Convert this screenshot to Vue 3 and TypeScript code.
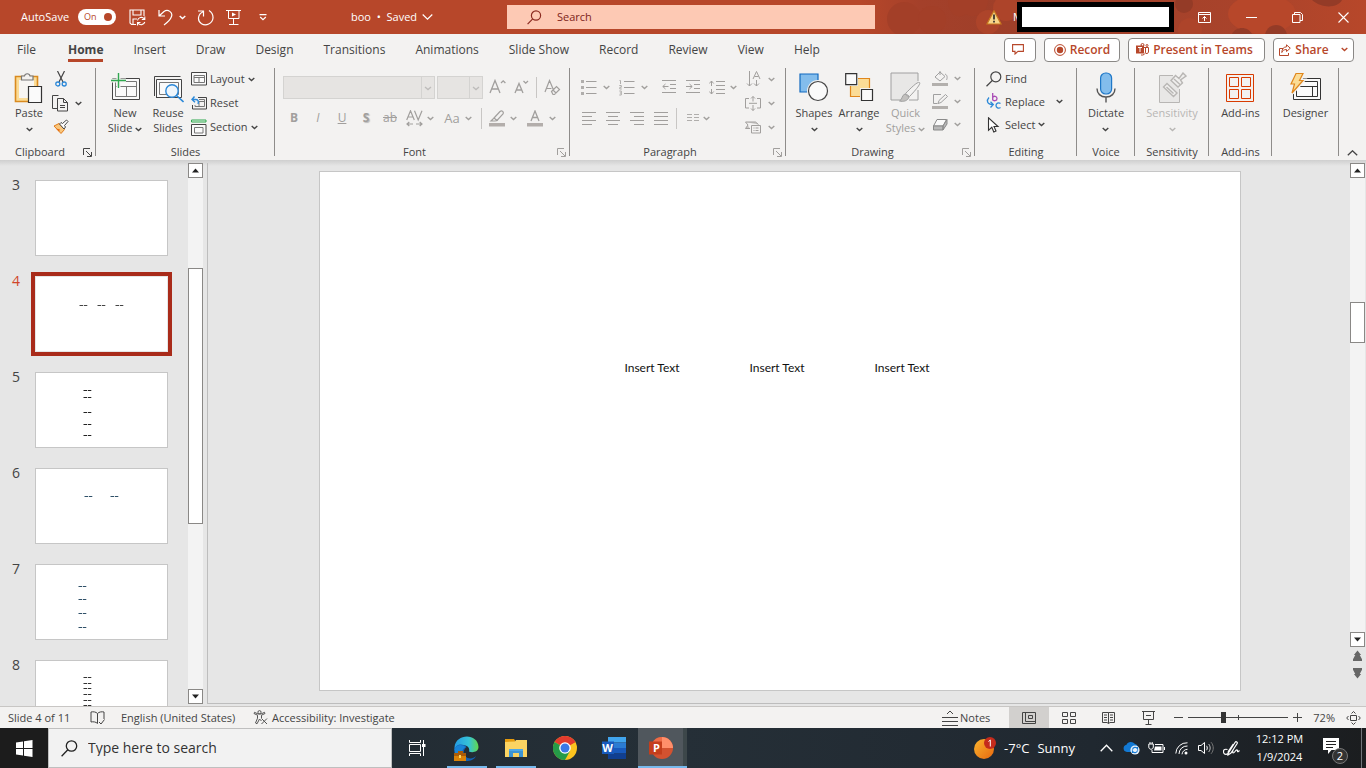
<script setup lang="ts">
import { h, ref } from 'vue'

const Chevron = () =>
  h('svg', { class: 'chev', width: 7, height: 5, viewBox: '0 0 7 5', 'aria-hidden': 'true' }, [
    h('path', { d: 'M.7 1l2.8 2.6L6.3 1', fill: 'none', stroke: 'currentColor', 'stroke-width': 1.4 }),
  ])

const Launcher = () =>
  h('svg', { class: 'launcher', width: 9, height: 9, viewBox: '0 0 9 9', 'aria-hidden': 'true' }, [
    h('path', { d: 'M.5 7V.5H7M3 3l5 5M8.500 4v4.500H4', fill: 'none', stroke: 'currentColor' }),
  ])

const tabs = ['File', 'Home', 'Insert', 'Draw', 'Design', 'Transitions', 'Animations', 'Slide Show', 'Record', 'Review', 'View', 'Help']
const activeTab = ref('Home')

interface Thumb {
  id: number
  tint: string
  marks: [number, number][]
}
const slides: Thumb[] = [
  { id: 3, tint: '#333', marks: [] },
  { id: 4, tint: '#444', marks: [[43, 28], [61, 28], [79, 28]] },
  { id: 5, tint: '#222', marks: [[47, 17], [47, 24], [47, 39], [47, 51], [47, 62]] },
  { id: 6, tint: '#2f5068', marks: [[48, 27], [74, 27]] },
  { id: 7, tint: '#2f5068', marks: [[42, 21], [42, 34], [42, 48], [42, 62]] },
  { id: 8, tint: '#333', marks: [[47, 16], [47, 22], [47, 27], [47, 33], [47, 39], [47, 44]] },
]
const selected = ref(4)
const autoSave = ref(true)
const zoom = ref(72)
const boxes = ['Insert Text', 'Insert Text', 'Insert Text']
const aligns = [
  { name: 'Align Left', d: 'M0 .5h14M0 4.500h10M0 8.500h14M0 12.500h10' },
  { name: 'Center', d: 'M0 .5h14M2 4.500h10M0 8.500h14M2 12.500h10' },
  { name: 'Align Right', d: 'M0 .5h14M4 4.500h10M0 8.500h14M4 12.500h10' },
  { name: 'Justify', d: 'M0 .5h14M0 4.500h14M0 8.500h14M0 12.500h14' },
]
</script>

<template>
  <div class="app">
    <header class="titlebar">
      <svg class="pattern" viewBox="0 0 506 34" preserveAspectRatio="xMaxYMid slice" aria-hidden="true">
        <rect x="0" width="506" height="34" fill="url(#fade)" />
        <defs>
          <linearGradient id="fade"><stop offset="0" stop-color="#b7472a" /><stop offset=".12" stop-color="#a4402a" /><stop offset=".3" stop-color="#9e3f29" /><stop offset=".75" stop-color="#a9432b" /><stop offset="1" stop-color="#b7472a" /></linearGradient>
        </defs>
        <g fill="#a33f28"><circle cx="44" cy="19" r="17" /><circle cx="72" cy="20" r="14" /><path d="M88 0h40c0 12-12 20-22 14-8 6-18 0-18-14z" /></g>
        <g fill="#ad442a"><circle cx="128" cy="22" r="12" /><circle cx="146" cy="8" r="13" /><circle cx="330" cy="30" r="12" /></g>
        <ellipse cx="402" cy="14" rx="34" ry="20" fill="#b7472a" />
        <g fill="#943b27"><circle cx="416" cy="36" r="11" /><circle cx="324" cy="4" r="9" /><path d="M452 0h30c-4 8-20 9-30 0zM372 34c4-8 16-8 20 0z" /></g>
      </svg>
      <div class="quick">
        <span id="as-label">AutoSave</span>
        <button class="toggle" role="switch" :aria-checked="autoSave" aria-labelledby="as-label" @click="autoSave = !autoSave">On<i></i></button>
        <button aria-label="Save" class="q-save">
          <svg width="17" height="17" viewBox="0 0 17 17" fill="none" stroke="#fff" stroke-width="1.100"><path d="M7 15.500H2.500L1 14V1h14v6M4 1v5h8V1M4 15v-5h4M8.500 11.500a3.800 3.800 0 0 1 6.800-1.500M15.800 7.500v3h-3M15.800 13a3.800 3.800 0 0 1-6.800 1M8.500 16.500v-3h3" /></svg>
        </button>
        <button aria-label="Undo" class="q-undo">
          <svg width="15" height="17" viewBox="0 0 15 17" fill="none" stroke="#fff" stroke-width="1.200"><path d="M1 1v6h6M1 7l5-4.500c4-3 9 1 7.500 5C12.500 10.500 10 13 6 16" /></svg>
        </button>
        <button aria-label="Undo list" class="q-chev"><Chevron /></button>
        <button aria-label="Redo" class="q-redo">
          <svg width="17" height="17" viewBox="0 0 17 17" fill="none" stroke="#fff" stroke-width="1.200"><path d="M1 2h5.500v5.500M6.500 2.500C.5 5 0 12 4.500 14.700c4.500 2.800 11-.2 11.500-5.700.2-3.500-1.500-6-4-7.500" /></svg>
        </button>
        <button aria-label="Start From Beginning" class="q-show">
          <svg width="16" height="17" viewBox="0 0 16 17" fill="none" stroke="#fff"><path d="M0 1.500h15M2.500 2v7.500h10.500V2M7.500 10v5.500M3 15.500h9.500" /><path d="M6 3.500v4l4-2z" fill="#fff" stroke="none" /></svg>
        </button>
        <button aria-label="Customize Quick Access Toolbar">
          <svg width="8" height="7" viewBox="0 0 8 7" fill="none" stroke="#fff" stroke-width="1.200"><path d="M.5.6h7M1.200 3L4 5.600 6.800 3" /></svg>
        </button>
      </div>
      <button class="doc">boo&nbsp; •&nbsp; Saved
        <svg width="11" height="6" viewBox="0 0 11 6" fill="none" stroke="#fff" stroke-width="1.200"><path d="M.7.5l4.800 4.600L10.300.5" /></svg>
      </button>
      <label class="search">
        <svg width="15" height="15" viewBox="0 0 15 15" fill="none" stroke="#8b2a20" stroke-width="1.200"><circle cx="9" cy="5.500" r="4.600" /><path d="M5.700 8.800L.6 14.200" /></svg>
        <input type="text" placeholder="Search" aria-label="Search" />
      </label>
      <div class="account">
        <svg width="16" height="15" viewBox="0 0 16 15"><path d="M8 .8L15 14H1z" fill="#f8d58a" stroke="#c8791f" stroke-width="1.200" /><path d="M8 4.500v5M8 10.800v1.800" stroke="#222" stroke-width="1.600" /></svg>
        <span class="initial">M</span>
        <span class="mask"></span>
      </div>
      <div class="winctl">
        <button aria-label="Ribbon Display Options"><svg width="13" height="11" viewBox="0 0 13 11" fill="none" stroke="#fff"><path d="M.5.5h12v10H.5zM.5 2.500h12M6.500 9V4.500M4.500 6.500l2-2 2 2" /></svg></button>
        <button aria-label="Minimize"><svg width="11" height="11" viewBox="0 0 11 11" stroke="#fff"><path d="M0 5.500h11" /></svg></button>
        <button aria-label="Restore"><svg width="11" height="11" viewBox="0 0 11 11" fill="none" stroke="#fff"><path d="M.5 2.500h7.500v8H.5zM2.500 2.500v-2h6l2 2v6H8" /></svg></button>
        <button aria-label="Close"><svg width="11" height="11" viewBox="0 0 11 11" stroke="#fff" stroke-width="1.100"><path d="M.5.5l10 10M10.500.5l-10 10" /></svg></button>
      </div>
    </header>

    <nav class="tabs">
      <button v-for="t in tabs" :key="t" :class="['tab', { on: t === activeTab }]" @click="activeTab = t"><span>{{ t }}</span></button>
      <div class="actions">
        <button class="act cm" aria-label="Comments"><svg width="12" height="11" viewBox="0 0 12 11" fill="none" stroke="#b7472a" stroke-width="1.100"><path d="M.6.6h10.800v6.800H6L3 10V7.400H.6z" /></svg></button>
        <button class="act rec"><svg width="12" height="12" viewBox="0 0 12 12"><circle cx="6" cy="6" r="5.400" fill="none" stroke="#b7472a" /><circle cx="6" cy="6" r="3.200" fill="#b7472a" /></svg>Record</button>
        <button class="act teams">
          <svg width="13" height="13" viewBox="0 0 13 13"><circle cx="6.500" cy="2" r="1.500" fill="none" stroke="#b7472a" /><circle cx="11" cy="2.500" r="1" fill="none" stroke="#b7472a" /><path d="M8 4.500h4.500v4.500a2 2 0 0 1-2.500 1.500M9.500 4.500V9c0 2-2 3.500-4.500 3" fill="none" stroke="#b7472a" /><path d="M0 2.500h8v8H0z" fill="#b7472a" /><path d="M2 4.500h4M4 4.500V9" stroke="#fff" /></svg>Present in Teams</button>
        <button class="act share">
          <svg width="12" height="12" viewBox="0 0 12 12" fill="none" stroke="#b7472a"><path d="M4 4.500H.5v7h9V9M7.500.8l3.800 3.400-3.800 3.300V5.500C5 5.500 3.800 6.500 2.800 8.500 3 5 4.500 3 7.500 2.800z" /></svg>Share<Chevron /></button>
      </div>
    </nav>

    <section class="ribbon" aria-label="Home ribbon">
      <div class="group g-clip">
        <div class="body">
          <button class="big">
            <span class="ic"><svg width="30" height="32" viewBox="0 0 30 32"><path d="M1.500 4.500h22v25h-22z" fill="#fbdc96" stroke="#d98a1f" stroke-width="1.600" /><path d="M5 8h15v18H5z" fill="#f7f5f2" /><path d="M7.500 8V4h3a2.800 2.800 0 0 1 5.500 0h3v4z" fill="#f3f1ef" stroke="#777" stroke-width="1.200" /><path d="M14.500 14.500h13v16h-13z" fill="#fafafa" stroke="#333" stroke-width="1.200" /></svg></span>
            <span>Paste</span><span><Chevron /></span>
          </button>
          <div class="rows">
            <button aria-label="Cut"><svg width="12" height="16" viewBox="0 0 12 16" fill="none"><path d="M2.500 0l5.500 11M9.500 0L4 11" stroke="#444" stroke-width="1.200" /><circle cx="2.800" cy="13" r="2" stroke="#2b88d8" stroke-width="1.300" /><circle cx="9.200" cy="13" r="2" stroke="#2b88d8" stroke-width="1.300" /></svg></button>
            <button aria-label="Copy" class="wide"><svg width="17" height="17" viewBox="0 0 17 17" fill="none" stroke="#444"><path d="M5 13.500H.5V.5h6M5.500 3.500h6l4 4v8.500h-10zM11.500 3.500v4h4M8 10.500h5M8 12.500h5" /></svg><Chevron /></button>
            <button aria-label="Format Painter"><svg width="16" height="16" viewBox="0 0 16 16"><path d="M1 7l7 7.500 3.500-4L6 4.500z" fill="#f9c67c" stroke="#e07b1a" /><path d="M3 9.500l4 1-1 2z" fill="#e8690b" /><path d="M6.500 5l4.500 5 1.500-2-1-1.500L15 2.500 13.500 1 9.500 4.500 8 3.500z" fill="#fff" stroke="#444" /></svg></button>
          </div>
        </div>
        <div class="foot"><span>Clipboard</span><button aria-label="Clipboard options" class="lb"><Launcher /></button></div>
      </div>

      <div class="group g-slides">
        <div class="body">
          <button class="big">
            <span class="ic"><svg width="32" height="32" viewBox="0 0 32 32" fill="none"><path d="M3.500 6.500h27v21h-27z" fill="#fafafa" stroke="#444" /><path d="M6.500 9.500h21v15h-21zM6.500 14.500h21M17.500 14.500v10" stroke="#777" /><path d="M9.500 0v15M1 8.500h16" stroke="#f3f2f1" stroke-width="4" /><path d="M9.500 1v15M2 8.500h15" stroke="#2fa84f" stroke-width="1.400" /></svg></span>
            <span>New</span><span>Slide <Chevron /></span>
          </button>
          <button class="big">
            <span class="ic"><svg width="31" height="30" viewBox="0 0 31 30" fill="none"><path d="M1.500 23V3.500h26" stroke="#444" /><path d="M3.500 25V6.500h25v18h-25z" stroke="#444" fill="#fafafa" /><path d="M6.500 9.500h19v12h-19z" stroke="#777" /><circle cx="19" cy="18" r="6.200" fill="#eef5fb" stroke="#2b88d8" stroke-width="1.400" /><path d="M23.500 22.500l7 6.500" stroke="#2b88d8" stroke-width="1.600" /></svg></span>
            <span>Reuse</span><span>Slides</span>
          </button>
          <div class="rows">
            <button><svg width="16" height="14" viewBox="0 0 16 14" fill="none"><path d="M.5.5h15v12.500H.5z" stroke="#444" fill="#fafafa" /><path d="M3 3.500h10.500v7H3zM3 5.500h10.500M8 5.500v5" stroke="#777" /></svg>Layout <Chevron /></button>
            <button><svg width="16" height="14" viewBox="0 0 16 14" fill="none"><path d="M7 1.500h8.500v11.500H1.500V9" stroke="#444" /><path d="M8 3.500h5.500v7H4V9M8 5.500h5M8 6v4" stroke="#777" /><path d="M3.500.5L1 3.500l3 2.800M1 3.500h3.500c2.500 0 3.500 1.500 2.500 4.500" stroke="#2b88d8" stroke-width="1.400" /></svg>Reset</button>
            <button><svg width="16" height="17" viewBox="0 0 16 17" fill="none"><path d="M.5 1h14.500v2H.5z" stroke="#2fa84f" fill="#e9f6ec" /><path d="M.5 5.500h14.500v11H.5z" stroke="#444" fill="#fafafa" /><path d="M3.500 8.500h8.500v5.500H3.500z" stroke="#777" /></svg>Section <Chevron /></button>
          </div>
        </div>
        <div class="foot"><span>Slides</span></div>
      </div>

      <div class="group g-font off">
        <div class="body col">
          <div class="line">
            <select class="sel name" aria-label="Font" disabled></select><select class="sel size" aria-label="Font size" disabled></select>
            <button class="t24" aria-label="Increase Font Size"><svg width="17" height="17" viewBox="0 0 17 17" fill="none" stroke="currentColor" stroke-width="1.300"><path d="M1 14L6 1.500 11 14M2.500 10h7M12 4l2.200-2.200L16.400 4" /></svg></button>
            <button class="t24" aria-label="Decrease Font Size"><svg width="15" height="17" viewBox="0 0 15 17" fill="none" stroke="currentColor" stroke-width="1.300"><path d="M1 14l4-9.500L9 14M2.500 11h5M9.500 2l2.200 2.200L14 2" /></svg></button>
            <i class="vs"></i>
            <button class="t24" aria-label="Clear Formatting"><svg width="17" height="17" viewBox="0 0 17 17" fill="none" stroke="currentColor" stroke-width="1.200"><path d="M1 13L5.500 1.500 9.500 11M2.500 9.500h5M7.500 12.500l5-5 3 3-5 5h-1.500zM9 11l3 3" /></svg></button>
          </div>
          <div class="line two">
            <button class="t24"><b>B</b></button><button class="t24"><em>I</em></button><button class="t24"><u>U</u></button><button class="t24 shadow">S</button><button class="t24"><s>ab</s></button>
            <button class="t36" aria-label="Character Spacing"><svg width="17" height="17" viewBox="0 0 17 17" fill="none" stroke="currentColor" stroke-width="1.200"><path d="M.7 10L4.500.8 8.300 10M2 7h5M8.500.8l3.700 9.200L16 .8M1 14h6M10 14h6M3.300 12L1 14l2.300 2M13.700 12l2.300 2-2.300 2" /></svg><Chevron /></button>
            <button class="t40 cc">Aa <Chevron /></button>
            <i class="vs"></i>
            <button class="t36" aria-label="Highlight Color"><svg width="17" height="17" viewBox="0 0 17 17"><path d="M2 11l3-3 3 2.500-2 .5zM5 8l6-6.500c2-1.500 4 .5 3 2.300L8 10.500z" fill="none" stroke="#a19f9d" stroke-width="1.200" /><path d="M0 13h16v3.500H0z" fill="#b3aeab" /></svg><Chevron /></button>
            <button class="t40" aria-label="Font Color"><svg width="17" height="17" viewBox="0 0 17 17"><path d="M4 11L8 1l4 10M5.500 7.500h5" fill="none" stroke="#a19f9d" stroke-width="1.300" /><path d="M0 13h16v3.500H0z" fill="#b3aeab" /></svg><Chevron /></button>
          </div>
        </div>
        <div class="foot"><span>Font</span><button aria-label="Font options" class="lb"><Launcher /></button></div>
      </div>

      <div class="group g-para off">
        <div class="body">
          <div class="col">
            <div class="line one">
              <button class="t39" aria-label="Bullets"><svg width="16" height="16" viewBox="0 0 16 16"><path d="M0 1h3v3H0zM0 7h3v3H0zM0 13h3v3H0z" fill="#b0aeac" /><path d="M5 2.500h10.500M5 8.500h10.500M5 14.500h10.500" stroke="currentColor" /></svg><Chevron /></button>
              <button class="t39" aria-label="Numbering"><svg width="16" height="17" viewBox="0 0 16 17" fill="none" stroke="currentColor"><path d="M5 2.500h10.500M5 8.500h10.500M5 14.500h10.500" /><path d="M.5 1.500h1V5M.3 6.500h2v1.800H.8V10h2M.3 12h2v4H.3M.8 14h1.500" stroke="#b0aeac" /></svg><Chevron /></button>
              <button class="t24" aria-label="Decrease Indent"><svg width="15" height="14" viewBox="0 0 15 14" fill="none" stroke="currentColor"><path d="M0 .5h14M8 4.500h6M8 8.500h6M0 12.500h14M6.500 6.500H.8M3.500 4L.8 6.500 3.500 9" /></svg></button>
              <button class="t24" aria-label="Increase Indent"><svg width="15" height="14" viewBox="0 0 15 14" fill="none" stroke="currentColor"><path d="M0 .5h14M8 4.500h6M8 8.500h6M0 12.500h14M0 6.500h6M3.500 4L6.200 6.500 3.500 9" /></svg></button>
              <button class="t36 ls" aria-label="Line Spacing"><svg width="17" height="15" viewBox="0 0 17 15" fill="none" stroke="currentColor"><path d="M7 1.500h9M7 5.500h9M7 9.500h9M7 13.500h9M2.500 1v5M2.500 9v5M.3 3.500L2.500 1l2.200 2.500M.3 11.500L2.500 14l2.200-2.500" /></svg><Chevron /></button>
            </div>
            <div class="line two">
              <button v-for="a in aligns" :key="a.name" class="t24" :aria-label="a.name"><svg width="14" height="13" viewBox="0 0 14 13" stroke="currentColor"><path :d="a.d" /></svg></button>
              <i class="vs"></i>
              <button class="t36" aria-label="Columns"><svg width="12" height="8" viewBox="0 0 12 8" stroke="#b0aeac"><path d="M0 .5h5M7 .5h5M0 3.500h5M7 3.500h5M0 6.500h5M7 6.500h5" /></svg><Chevron /></button>
            </div>
          </div>
          <div class="rows">
            <button aria-label="Text Direction"><svg width="17" height="17" viewBox="0 0 17 17" fill="none" stroke="currentColor"><path d="M4.500 0v15M2 12.500L4.500 15 7 12.500M11.500 9v6M9 12.500l2.500 2.500 2.500-2.500M8 8L11.500.5 15 8M9.500 5.500h4" /></svg><Chevron /></button>
            <button aria-label="Align Text"><svg width="17" height="15" viewBox="0 0 17 15" fill="none" stroke="currentColor"><path d="M4 2.500H.5V12H4M12 2.500h3.500V12H12M4 7.300h8M8 .5v5M8 9v5.500M6 2.500L8 .5l2 2M6 12.500l2 2 2-2" /></svg><Chevron /></button>
            <button aria-label="Convert to SmartArt"><svg width="17" height="13" viewBox="0 0 17 13" fill="none" stroke="currentColor"><path d="M.5 1h10l3 2.500M.5 1L3 4 .5 7.500H5" fill="#c8c6c4" /><path d="M6.500 4.500h9v7.500h-9zM8.500 7h1M10.500 7h3M8.500 9.500h1M10.500 9.500h3" fill="#f3f2f1" /></svg><Chevron /></button>
          </div>
        </div>
        <div class="foot"><span>Paragraph</span><button aria-label="Paragraph options" class="lb"><Launcher /></button></div>
      </div>

      <div class="group g-draw">
        <div class="body">
          <button class="big"><span class="ic"><svg width="30" height="30" viewBox="0 0 30 30"><path d="M1 1h18v18H1z" fill="#83bdec" stroke="#1169bf" stroke-width="1.200" /><circle cx="19" cy="18" r="11" fill="#f3f2f1" /><circle cx="19" cy="18" r="9.500" fill="#fafafa" stroke="#444" stroke-width="1.200" /></svg></span><span>Shapes</span><span><Chevron /></span></button>
          <button class="big"><span class="ic"><svg width="29" height="29" viewBox="0 0 29 29"><path d="M5.500 5.500h19v18h-19z" fill="#fbdc96" stroke="#e0861b" stroke-width="1.200" /><path d="M.5.5h11v11H.5zM16.500 16.500h11v11h-11z" fill="#fafafa" stroke="#f3f2f1" stroke-width="3" /><path d="M.7.7h11v11H.7zM16.500 16.500h11v11h-11z" fill="#fafafa" stroke="#333" stroke-width="1.200" /></svg></span><span>Arrange</span><span><Chevron /></span></button>
          <button class="big dim"><span class="ic"><svg width="32" height="31" viewBox="0 0 32 31"><path d="M1 1h27v14L17 28H1z" fill="#e8e7e6" /><path d="M11 28H1V1h27v8M28 18v10h-9" fill="none" stroke="#a0a0a0" /><path d="M29.500 10.500c2 1-6 10-10 14l-4-3c4-4 12-12.500 14-11z" fill="#f3f2f1" stroke="#a0a0a0" /><path d="M15 22l4 3c-1 4-6 5-9.500 4 3-1 2-6 5.500-7z" fill="#c2c0be" stroke="#a0a0a0" /></svg></span><span>Quick</span><span>Styles <Chevron /></span></button>
          <div class="rows r23 dim">
            <button aria-label="Shape Fill"><svg width="17" height="17" viewBox="0 0 17 17" fill="none" stroke="#a0a0a0"><path d="M3 7l5-5 5 4.500-5 4.500zM8 5V1M13 4c2.500 1 2.500 4 1.500 6" /><path d="M0 13h16v3H0z" fill="#b3b0ad" stroke="none" /></svg><Chevron /></button>
            <button aria-label="Shape Outline"><svg width="17" height="17" viewBox="0 0 17 17" fill="none" stroke="#a0a0a0"><path d="M9 1.500H1.500v9h4M6 10.500l1-3 6.500-6 2 2-6.500 6z" /><path d="M0 13h16v3H0z" fill="#b3b0ad" stroke="none" /></svg><Chevron /></button>
            <button aria-label="Shape Effects"><svg width="17" height="14" viewBox="0 0 17 14"><path d="M5 1.500h9.500L11 8H1.500z" fill="#fafafa" stroke="#8a8a8a" /><path d="M1.500 8v4H11V8zM11 12l4-6V1.500L11 8z" fill="#b9b9b9" stroke="#8a8a8a" /></svg><Chevron /></button>
          </div>
        </div>
        <div class="foot"><span>Drawing</span><button aria-label="Drawing options" class="lb dim"><Launcher /></button></div>
      </div>

      <div class="group g-edit">
        <div class="body">
          <div class="rows r23">
            <button><svg width="16" height="16" viewBox="0 0 16 16" fill="none" stroke="#444" stroke-width="1.200"><circle cx="9.800" cy="5.800" r="5" /><path d="M6.300 9.500L.5 15.200" /></svg>Find</button>
            <button><svg width="16" height="17" viewBox="0 0 16 17" fill="none" stroke-width="1.300"><path d="M6.700 0v7.500M6.700 4.500c1-2 4.300-1.500 4.300 1s-3.300 3-4.300 1" stroke="#a94ab5" /><path d="M14.500 10.500c-2-1.500-4.500 0-4.500 2s2.500 3.500 4.500 2M3 4.500c-2.500 2.500-2.500 7 4 7M4.500 8.800L7.300 11.500 4.500 14.500" stroke="#2b88d8" /></svg>Replace <Chevron /></button>
            <button><svg width="16" height="16" viewBox="0 0 16 16"><path d="M2.500.8v12.500l3.300-3 2 4.700 2.200-1-2-4.500h4z" fill="#fff" stroke="#333" stroke-width="1.100" /></svg>Select <Chevron /></button>
          </div>
        </div>
        <div class="foot"><span>Editing</span></div>
      </div>

      <div class="group g-voice">
        <div class="body"><button class="big"><span class="ic"><svg width="20" height="32" viewBox="0 0 20 32"><rect x="4.600" y="1" width="11" height="21" rx="5" fill="#83bdec" stroke="#1f78c8" stroke-width="1.200" /><path d="M1 16.500c0 5 3.500 8.500 9 8.500s9-3.500 9-8.500M10 25v5.500" fill="none" stroke="#555" stroke-width="1.400" /></svg></span><span>Dictate</span><span><Chevron /></span></button></div>
        <div class="foot"><span>Voice</span></div>
      </div>
      <div class="group g-sens">
        <div class="body"><button class="big pale"><span class="ic"><svg width="29" height="32" viewBox="0 0 29 32" fill="none" stroke="#b8b6b4"><path d="M15 3.500H1.500v27h20V17" fill="#e8e7e6" /><path d="M5.500 15l3.500-3.500 10 9.500-3.500 3.500zM8.500 15l7 6.500M13 8.500l4.500-5 3.500 3 4-5.500 3 3-5.500 4 2 3-4.500 4z" fill="#f0efee" stroke-width="1.400" /><path d="M16 7l6 5.500" stroke-width="1.400" /></svg></span><span>Sensitivity</span><span><Chevron /></span></button></div>
        <div class="foot"><span>Sensitivity</span></div>
      </div>
      <div class="group g-add">
        <div class="body"><button class="big"><span class="ic"><svg width="28" height="28" viewBox="0 0 28 28" fill="none" stroke="#d83b01"><path d="M.5.5h27v27H.5zM3.500 3.500h9v9h-9zM15.500 3.500h9v9h-9zM3.500 15.500h9v9h-9zM15.500 15.500h9v9h-9z" /></svg></span><span>Add-ins</span></button></div>
        <div class="foot"><span>Add-ins</span></div>
      </div>
      <div class="group g-des">
        <div class="body"><button class="big"><span class="ic"><svg width="31" height="32" viewBox="0 0 31 32"><path d="M3.500 6.500h27v21h-27z" fill="#fafafa" stroke="#333" /><path d="M6.500 9.500h21v15h-21zM10 14.500h17.500M22.500 14.500v10" fill="none" stroke="#333" /><path d="M6 1.500h7L9.500 8.500H13L2 21l2.500-9H1z" fill="#fbdc96" stroke="#f3f2f1" stroke-width="4" /><path d="M6 1.500h7L9.500 8.500H13L2 21l2.500-9H1z" fill="#fbdc96" stroke="#e0861b" stroke-width="1.200" /></svg></span><span>Designer</span></button></div>
        <div class="foot"></div>
      </div>
      <button class="collapse" aria-label="Collapse the Ribbon"><svg width="11" height="6" viewBox="0 0 11 6" fill="none" stroke="#444" stroke-width="1.300"><path d="M.8 5.300L5.500.8l4.700 4.500" /></svg></button>
    </section>

    <main class="work">
      <ol class="thumbs">
        <li v-for="s in slides" :key="s.id" :class="{ cur: s.id === selected }" @click="selected = s.id">
          <span class="no">{{ s.id }}</span>
          <button class="thumb" :aria-label="'Slide ' + s.id">
            <svg viewBox="0 0 131 74"><path v-for="(m, i) in s.marks" :key="i" :d="`M${m[0]}.500 ${m[1]}.500h8`" :stroke="s.tint" stroke-dasharray="3.500 .8" /></svg>
          </button>
        </li>
      </ol>
      <div class="scroll left">
        <button aria-label="Scroll up"><svg width="9" height="5" viewBox="0 0 9 5"><path d="M1 4.500L4.500.5 8 4.500z" fill="#222" /></svg></button>
        <div class="track"><div class="handle"></div></div>
        <button aria-label="Scroll down"><svg width="9" height="5" viewBox="0 0 9 5"><path d="M1 .5L4.500 4.500 8 .5z" fill="#222" /></svg></button>
      </div>
      <div class="canvas">
        <article class="slide"><p v-for="(b, i) in boxes" :key="i">{{ b }}</p></article>
      </div>
      <div class="scroll right">
        <button aria-label="Scroll up"><svg width="9" height="5" viewBox="0 0 9 5"><path d="M1 4.500L4.500.5 8 4.500z" fill="#222" /></svg></button>
        <div class="track"><div class="handle"></div></div>
        <button aria-label="Scroll down"><svg width="9" height="5" viewBox="0 0 9 5"><path d="M1 .5L4.500 4.500 8 .5z" fill="#222" /></svg></button>
        <button class="jump" aria-label="Previous Slide"><svg width="9" height="12" viewBox="0 0 10 12"><path d="M5 0l4 5H7.500L10 9.500v2H0v-2L2.500 5H1z" fill="#666" /></svg></button>
        <button class="jump" aria-label="Next Slide"><svg width="9" height="12" viewBox="0 0 10 12"><path d="M5 12L1 7h1.500L0 2.500v-2h10v2L7.500 7H9z" fill="#666" /></svg></button>
      </div>
    </main>

    <footer class="status">
      <span class="s-slide">Slide 4 of 11</span>
      <button class="s-book" aria-label="Spelling"><svg width="15" height="14" viewBox="0 0 15 14" fill="none" stroke="#444"><path d="M7.500 2.500C6 .8 3 .5 1 1v10c2-.5 5-.2 6.500 1.500M7.500 2.500C9 .8 12 .5 14 1v7M7.500 2.500v10M9 11l2 2 3.500-4.500" /></svg></button>
      <button class="s-lang">English (United States)</button>
      <button class="s-acc"><svg width="16" height="15" viewBox="0 0 16 15" fill="none" stroke="#555"><circle cx="6.500" cy="2.200" r="1.600" /><path d="M1 3.500l3.500 1.700v3L2.500 13l1.500.8L6.500 9l2 2M1 3.500l.5-1.200L5 4h3l3.500-1.700.5 1.200-3.500 1.700v3M8.500 8.500l5.500 5.500M14 8.500L8.500 14" /></svg>Accessibility: Investigate</button>
      <div class="s-right">
        <button class="notes"><svg width="17" height="16" viewBox="0 0 17 16" fill="none" stroke="#444"><path d="M0 7.500h16M0 11.500h16M0 15.500h16M5 4l3-3 3 3" /></svg>Notes</button>
        <button class="view on" aria-label="Normal"><svg width="14" height="12" viewBox="0 0 14 12" fill="none" stroke="#444"><path d="M.5.5h13v11H.5zM3.500.5v9M3.500 9.500h10M6.500 3.500h4v3h-4z" /></svg></button>
        <button class="view" aria-label="Slide Sorter"><svg width="14" height="12" viewBox="0 0 14 12" fill="none" stroke="#444"><path d="M.5.5h5v4h-5zM8.500.5h5v4h-5zM.5 7.500h5v4h-5zM8.500 7.500h5v4h-5z" /></svg></button>
        <button class="view" aria-label="Reading View"><svg width="14" height="13" viewBox="0 0 14 13" fill="none" stroke="#444"><path d="M6.500 1.500H.5v10h4.500l1.500 1L8 11.500h4.500v-10zM6.500 1.500v11M2 4h3M2 6.500h3M2 9h3M8 4h3M8 6.500h3M8 9h3" /></svg></button>
        <button class="view" aria-label="Slide Show"><svg width="14" height="14" viewBox="0 0 14 14" fill="none" stroke="#444"><path d="M0 .5h13M1.500 1v7.500h10V1M4 4.500h5M6.500 8.500v5M3.500 13.500h6" /></svg></button>
        <button class="z" aria-label="Zoom out"><svg width="9" height="9" viewBox="0 0 9 9" stroke="#444"><path d="M0 4.500h9" /></svg></button>
        <input class="range" type="range" min="10" max="190" v-model="zoom" aria-label="Zoom" />
        <button class="z" aria-label="Zoom in"><svg width="9" height="9" viewBox="0 0 9 9" stroke="#444"><path d="M0 4.500h9M4.500 0v9" /></svg></button>
        <button class="pct">72%</button>
        <button class="fit" aria-label="Fit slide to window"><svg width="15" height="14" viewBox="0 0 15 14" fill="none" stroke="#444"><path d="M4.500 4.500h6v5h-6zM5.500 2.500l2-2 2 2M5.500 11.500l2 2 2-2M2.500 5L.7 7l1.800 2M12.500 5l1.800 2-1.800 2" /></svg></button>
      </div>
    </footer>

    <div class="taskbar">
      <button class="start" aria-label="Start"><svg width="17" height="17" viewBox="0 0 17 17" fill="#fff"><path d="M0 2.500L7 1.500v6.500H0zM8 1.300L16.500 0v8H8zM0 9h7v6.500L0 14.500zM8 9h8.500v8L8 15.700z" /></svg></button>
      <label class="tsearch"><svg width="17" height="17" viewBox="0 0 17 17" fill="none" stroke="#222" stroke-width="1.300"><circle cx="10.500" cy="6" r="5.200" /><path d="M6.800 9.800L.6 16.200" /></svg><input type="text" placeholder="Type here to search" aria-label="Type here to search" /></label>
      <button class="app-btn tv" aria-label="Task View"><svg width="17" height="16" viewBox="0 0 17 16" fill="none" stroke="#fff"><path d="M.5 0v2.500h11V0M.5 4.500h11v7H.5zM.5 16v-2.500h11V16M14.500 0v16" /><path d="M13 4h3.500v3H13z" fill="#fff" stroke="none" /></svg></button>
      <button class="app-btn run" aria-label="Microsoft Edge"><svg width="25" height="25" viewBox="0 0 25 25"><defs><linearGradient id="eg" x2="1"><stop stop-color="#249ce4" /><stop offset=".6" stop-color="#36c3d8" /><stop offset="1" stop-color="#62d94a" /></linearGradient></defs><path d="M.5 11C2-3 24-3 24.500 11c0 5-6 6-9.500 4.500 1-3-1-6-5-6-5 0-8 2-9.500 5z" fill="url(#eg)" /><path d="M.6 14c1-6 8-7 12-3-3 2-5 8 1 11 4 1 6 0 8.500-2-2 4-6 5-9.500 5C5 25 0 21 .6 14z" fill="#1361b3" /><path d="M.6 13c2-5 8-5 11-2-4 2-5 8-2 13C3 23 0 18 .6 13z" fill="#1884d8" /><path d="M0 17h12v8H0z" fill="#d98208" /><path d="M0 17h12v3H0zM4 15h5v2H4z" fill="#a85b08" /><path d="M5 19h2v3H5z" fill="#ffd45a" /></svg></button>
      <button class="app-btn run exp" aria-label="File Explorer"><svg width="22" height="19" viewBox="0 0 22 19"><path d="M0 0h9l2 3H0z" fill="#e69b0d" /><path d="M0 3l10-.5 1-1.500h11v17H0z" fill="#fcd462" /><path d="M4 10h14v8h-4v-4H8v4H4z" fill="#3c94d4" /><path d="M4 10h14v2H4z" fill="#4fa8e6" /></svg></button>
      <button class="app-btn" aria-label="Google Chrome"><svg width="24" height="24" viewBox="0 0 24 24"><circle cx="12" cy="12" r="12" fill="#fcc31e" /><path d="M12 12L1.600 6A12 12 0 0 1 22.400 6z" fill="#e33b2e" /><path d="M12 12L1.600 6A12 12 0 0 0 12 24l5-9z" fill="#259b48" /><path d="M22.400 6H12v6z" fill="#e33b2e" /><circle cx="12" cy="12" r="5.800" fill="#fff" /><circle cx="12" cy="12" r="4.500" fill="#3b78e7" /></svg></button>
      <button class="app-btn" aria-label="Word"><svg width="24" height="22" viewBox="0 0 24 22"><path d="M6 0h18v5.500H6z" fill="#41a5ee" /><path d="M6 5.500h18V11H6z" fill="#2b7cd3" /><path d="M6 11h18v5.500H6z" fill="#185abd" /><path d="M6 16.500h18V22H6z" fill="#103f91" /><path d="M0 4.500h12v12.500H0z" fill="#185abd" /></svg><span class="badge">W</span></button>
      <button class="app-btn run ppt" aria-label="PowerPoint"><svg width="24" height="24" viewBox="0 0 24 24"><circle cx="13" cy="12" r="11" fill="#d35230" /><path d="M13 1a11 11 0 0 1 11 11H13z" fill="#ff8f6b" /><path d="M13 1v11H2A11 11 0 0 1 13 1z" fill="#ed6c47" /><path d="M0 5.500h13v13H0z" fill="#c43e1c" /></svg><span class="badge">P</span></button>
      <div class="tray">
        <button class="weather">
          <svg width="22" height="22" viewBox="0 0 22 22"><defs><linearGradient id="sun" x2="1" y2="1"><stop stop-color="#fbb52e" /><stop offset="1" stop-color="#e8680f" /></linearGradient></defs><circle cx="10" cy="12" r="10" fill="url(#sun)" /><circle cx="16" cy="6" r="6" fill="#c42b1c" /><path d="M14.500 4.500L16.300 3v6.500" fill="none" stroke="#fff" /></svg>
          <span>-7°C</span><span>Sunny</span></button>
        <button aria-label="Show hidden icons" class="up"><svg width="13" height="8" viewBox="0 0 13 8" fill="none" stroke="#fff" stroke-width="1.300"><path d="M.7 7.200l5.800-6 5.800 6" /></svg></button>
        <button aria-label="OneDrive"><svg width="17" height="14" viewBox="0 0 17 14"><path d="M4 11a3.700 3.700 0 0 1-.5-7.300A5 5 0 0 1 12 3c2.500.5 3.500 3 2 5.500L11 11z" fill="#1379d3" /><circle cx="12" cy="9" r="4.600" fill="#e8f2fb" /><path d="M9.500 8.500a2.700 2.700 0 0 1 5-.8V6M14.500 9.500a2.700 2.700 0 0 1-5 .8V12" fill="none" stroke="#1379d3" stroke-width="1.200" /></svg></button>
        <button aria-label="Battery"><svg width="17" height="13" viewBox="0 0 17 13" fill="none" stroke="#fff"><path d="M7 2.500h8v8H4V8M16.500 5v3M.8 2v3c0 3 4.500 3 4.500 0V2zM2 2V0M4.200 2V0" /><path d="M7 4.500h6.500v4H6z" fill="#fff" stroke="none" /></svg></button>
        <button aria-label="Network"><svg width="14" height="13" viewBox="0 0 14 13" fill="none" stroke="#fff"><path d="M.8 11.500A11 11 0 0 1 12.500.8M4 12A8 8 0 0 1 12.500 4M7 12.300a5.500 5.500 0 0 1 5.500-5" /><circle cx="11" cy="11" r="1.500" fill="#fff" stroke="none" /></svg></button>
        <button aria-label="Volume"><svg width="17" height="14" viewBox="0 0 17 14" fill="none" stroke="#fff"><path d="M.5 4.500H3L6.500 1.500v11L3 9.500H.5zM8.500 4.800c1 1.200 1 3.200 0 4.400" /><path d="M10.700 3c2 2.200 2 5.800 0 8" stroke="#bbb" /><path d="M13 1.200c3 3.200 3 8.400 0 11.600" stroke="#777" /></svg></button>
        <button aria-label="Ink Workspace"><svg width="17" height="15" viewBox="0 0 17 15" fill="none" stroke="#fff" stroke-width="1.200"><path d="M4.500 8.500C1 7.500 0 9.500.8 12c.7 2 3.200 1.500 4.200.5l7-11c1-1.500 3-.5 2 1.300L8 12l-3 2 .3-3.500 5-7.500M10 9.500c-1 3 .5 3 2 1s2.500-2 2.500-.5 1 .5 2-.5" /></svg></button>
        <div class="clock"><span>12:12 PM</span><span>1/9/2024</span></div>
        <button class="notif" aria-label="2 notifications"><svg width="17" height="17" viewBox="0 0 17 17"><path d="M0 0h16v12H8.500L5 16v-4H0z" fill="#fff" /><path d="M3 3.500h10M3 6.500h10M3 9.500h7" stroke="#222" /></svg><span class="cnt">2</span></button>
      </div>
    </div>
  </div>
</template>

<style>
html,
body {
  margin: 0;
  background: #e6e6e6;
}
</style>

<style scoped>
.app {
  display: flex;
  flex-direction: column;
  height: 100vh;
  overflow: hidden;
  font: 11px/16px "Segoe UI", "Open Sans", "Noto Sans", sans-serif;
  color: #444;
}
button {
  display: flex;
  align-items: center;
  padding: 0;
  border: 0;
  background: none;
  font: inherit;
  color: inherit;
  white-space: nowrap;
}
svg { display: block; flex: none; }
.chev { display: inline-block; }

/* title bar */
.titlebar {
  position: relative;
  display: grid;
  grid-template-columns: 351px 156px minmax(120px, 368px) 1fr auto;
  align-items: center;
  flex: none;
  height: 34px;
  background: #b7472a;
  color: #fff;
}
.titlebar > * { position: relative; }
.titlebar > .pattern { position: absolute; right: 0; top: 0; width: 506px; height: 34px; }
.quick { display: flex; align-items: center; padding-left: 21px; }
.toggle {
  justify-content: space-between;
  width: 38px;
  height: 16px;
  margin: 0 13px 0 9px;
  padding: 0 4px 0 6px;
  border-radius: 8px;
  background: #fff;
  color: #b7472a;
  font-size: 9px;
}
.toggle i { width: 8px; height: 8px; border-radius: 50%; background: #b7472a; }
.q-save { margin-right: 12px; }
.q-undo { margin-right: 6px; }
.q-chev { margin-right: 11px; }
.q-redo { margin-right: 12px; }
.q-show { margin-right: 17px; }
.doc { gap: 5px; }
.search { display: flex; align-items: center; gap: 15px; height: 24px; padding: 0 20px; background: #fdc9b4; }
.search input { flex: 1; min-width: 0; }
input { border: 0; padding: 0; background: none; font: inherit; outline: 0; }
.search input::placeholder { color: #7d1f1a; opacity: 1; }
.account { display: flex; align-items: center; justify-content: flex-end; }
.initial { width: 10px; margin: 0 -6px 0 11px; }
.mask { position: relative; box-sizing: border-box; width: 157px; height: 30px; border: 5px solid #000; background: #fff; }
.winctl { display: flex; }
.winctl button { justify-content: center; width: 46px; height: 34px; }
.winctl button:first-child { width: 54px; padding-left: 6px; }

/* tabs */
.tabs { display: flex; flex: none; height: 32px; padding-left: 2px; background: #f3f2f1; font-size: 12px; }
.tab { align-items: stretch; padding: 0 15px; }
.tab:first-child { margin-right: 2px; }
.tab span { padding-top: 8px; box-sizing: border-box; height: 28px; }
.tab.on span { border-bottom: 3px solid #b7472a; font-weight: 700; }
.actions { display: flex; align-items: center; gap: 8px; margin-left: auto; padding: 0 12px 3px 0; }
.act {
  box-sizing: border-box;
  justify-content: center;
  gap: 4px;
  height: 24px;
  margin-top: 2px;
  border: 1px solid #8a8886;
  border-radius: 4px;
  background: #fff;
  color: #b7472a;
  font-weight: 600;
}
.cm { width: 32px; padding-right: 4px; }
.rec { width: 76px; }
.teams { width: 137px; padding-right: 4px; }
.share { width: 81px; }
.share .chev { margin-left: 8px; }

/* ribbon */
.ribbon { display: flex; flex: none; height: 94px; background: #f3f2f1; }
.group { position: relative; display: flex; flex-direction: column; flex: none; box-sizing: border-box; height: 94px; }
.group::after { content: ""; position: absolute; right: 0; top: 2px; bottom: 4px; width: 1px; background: #8e8c8a; }
.g-clip { width: 96px; }
.g-slides { width: 179px; }
.g-font { width: 295px; }
.g-para { width: 216px; }
.g-draw { width: 189px; }
.g-edit { width: 102px; }
.g-voice { width: 58px; }
.g-sens { width: 74px; }
.g-add { width: 63px; }
.g-des { width: 67px; }
.body { display: flex; flex: 1; }
.off .body, .dim { color: #a19f9d; }
.pale { color: #b8b6b4; }
.foot { display: flex; align-items: center; justify-content: center; height: 16px; }
.g-clip .foot, .g-font .foot, .g-para .foot, .g-draw .foot { padding-right: 16px; }
.lb { position: absolute; right: 4px; bottom: 3px; }
.off .lb { color: #a19f9d; }
.big { flex-direction: column; padding-top: 4px; line-height: 15px; }
.big span { flex: none; height: 15px; }
.big .ic { display: flex; align-items: center; justify-content: center; height: 35px; }
.rows { display: flex; flex-direction: column; padding-top: 1px; }
.rows button { gap: 3px; height: 24px; }
.r23 button { height: 23px; }
.g-clip .body > .big { width: 52px; padding-left: 6px; }
.g-clip .rows button { width: 17px; justify-content: center; gap: 6px; }
.g-clip .rows .wide { width: 30px; justify-content: flex-start; }
.g-slides .body { padding-left: 6px; }
.g-slides .big { width: 40px; }
.g-slides .rows { padding-left: 3px; }
.g-slides .big:first-child { width: 46px; }
.col { display: flex; flex-direction: column; }
.line { display: flex; align-items: center; height: 22px; margin-top: 10px; }
.line.two { margin-top: 9px; font-size: 12px; }
.t24, .t36, .t39, .t40 { justify-content: center; flex: none; height: 22px; }
.t24 { width: 24px; }
.t36 { width: 36px; gap: 4px; }
.t39 { justify-content: flex-start; width: 38px; gap: 6px; }
.t40 { width: 40px; gap: 5px; }
.cc { font-size: 13px; }
.shadow { font-weight: 700; text-shadow: 1px 1px 1px #bbb; }
.vs { flex: none; width: 1px; height: 21px; background: #c8c6c4; }
.g-font .line { padding-left: 8px; }
.g-font .line.two { padding-left: 7px; }
.g-font .line .vs { margin: 0 3px; }
.sel {
  appearance: none;
  box-sizing: border-box;
  height: 23px;
  border: 1px solid #c8c6c4;
  border-radius: 0;
  margin: 0 2px 0 0;
  background:
    url("data:image/svg+xml,%3Csvg xmlns='http://www.w3.org/2000/svg' width='13' height='21'%3E%3Cpath d='M.5 0v21' stroke='%23c8c6c4'/%3E%3Cpath d='M4 10l3 2.600L10 10' fill='none' stroke='%23a8a6a4' stroke-width='1.300'/%3E%3C/svg%3E") right center no-repeat #e1dfdd;
}
.name { width: 152px; }
.size { width: 46px; }
.g-para .body { padding-left: 7px; }
.g-para .body > .col { width: 168px; }
.g-para .one { padding-left: 4px; }
.g-para .line .vs { margin: 0 3px; }
.g-para .rows button { gap: 6px; }
.g-draw .body { padding-left: 6px; }
.g-draw .big { width: 44px; }
.g-draw .big:nth-child(2) { width: 46px; }
.g-draw .big:nth-child(3) { width: 47px; }
.g-draw .rows { padding-left: 3px; }
.g-draw .rows button { gap: 5px; }
.g-edit .body { padding-left: 11px; }
.g-edit .rows button:nth-child(2) .chev { margin-left: 8px; }
.g-voice .body, .g-sens .body, .g-add .body, .g-des .body { justify-content: center; }
.collapse { align-self: flex-end; margin: 0 8px 4px auto; }

/* workspace */
.work {
  display: flex;
  flex: 1;
  min-height: 0;
  background: linear-gradient(#cfcfcf, #e6e6e6 6px);
}
.thumbs { display: flex; flex-direction: column; gap: 20px; box-sizing: border-box; width: 188px; margin: 0; padding: 20px 0 0 12px; overflow: hidden; list-style: none; }
.thumbs li { display: flex; flex: none; }
.no { width: 23px; font-size: 14px; line-height: 9px; }
.cur .no { color: #d0452a; }
.thumb { box-sizing: border-box; width: 133px; height: 76px; border: 1px solid #c6c6c6; background: #fff; }
.thumb svg { width: 100%; }
.cur .thumb { outline: 4px solid #a92b1a; border-color: #e6e6e6; }
.scroll { display: flex; flex-direction: column; box-sizing: border-box; flex: none; width: 15px; padding: 3px 0 2px; }
.scroll button { justify-content: center; box-sizing: border-box; width: 15px; height: 15px; border: 1px solid #8a8886; background: #fff; }
.track { display: flex; flex-direction: column; flex: 1; background: #f3f3f3; }
.handle { box-sizing: border-box; border: 1px solid #8a8886; background: #fff; }
.left .track { padding-top: 90px; }
.left .handle { height: 256px; }
.right .track { padding-top: 124px; }
.right .handle { height: 41px; }
.right { margin-right: 1px; padding-bottom: 25px; }
.scroll .jump { flex: none; height: 17px; border: 0; background: none; }
.canvas { display: flex; flex: 1; min-width: 0; margin: 3px 0 2px 4px; padding: 8px 109px 12px 111px; border-left: 1px solid #bdbdbd; border-bottom: 1px solid #bdbdbd; }
.slide { display: flex; justify-content: center; gap: 70px; flex: 1; box-sizing: border-box; padding: 188px 6px 0 0; border: 1px solid #c6c6c6; background: #fff; color: #111; font-family: "Century Gothic", Lato, sans-serif; font-size: 12px; }
.slide p { margin: 0; }

/* status bar */
.status { display: flex; align-items: center; flex: none; box-sizing: border-box; height: 22px; padding-left: 8px; border-top: 1px solid #c8c6c4; background: #f3f2f1; }
.s-slide { width: 82px; }
.s-book { width: 31px; }
.s-lang { width: 132px; }
.s-acc { gap: 3px; }
.s-right { display: flex; align-items: center; margin-left: auto; padding-right: 5px; }
.notes { gap: 1px; margin-right: 19px; }
.view { justify-content: center; width: 40px; height: 21px; }
.view.on { background: #d2d0ce; }
.view:nth-of-type(5) { margin-right: 5px; }
.z { width: 9px; }
.range {
  appearance: none;
  width: 100px;
  height: 12px;
  margin: 0 5px;
  background: linear-gradient(#444, #444) 50% 50% / 1px 5px no-repeat, linear-gradient(#444, #444) 0 50% / 100% 1px no-repeat;
}
.range::-webkit-slider-thumb { appearance: none; width: 5px; height: 11px; background: #333; }
.pct { margin: 0 11px; }

/* taskbar */
.taskbar { display: flex; flex: none; height: 40px; background: linear-gradient(90deg, #202930, #252f37 50%, #202830 80%, #1b1d1f); color: #fff; }
.start { justify-content: center; width: 48px; background: #1c1c1c; }
.tsearch { display: flex; align-items: center; gap: 10px; box-sizing: border-box; width: 344px; padding: 0 12px; border: 1px solid #bfbfbf; background: #f2f2f2; font-size: 14px; }
.tsearch input { flex: 1; min-width: 0; }
.tsearch input::placeholder { color: #333; opacity: 1; }
.app-btn { position: relative; justify-content: center; width: 49px; }
.tv { width: 50px; }
.run::after { content: ""; position: absolute; left: 5px; right: 4px; bottom: 0; height: 2px; background: #76b9ed; }
.ppt { background: #50575d; border-right: 4px solid #3d474a; box-sizing: border-box; }
.ppt::after { left: 0; right: -4px; }
.badge { position: absolute; left: 13px; top: 12px; width: 11px; font-weight: 700; text-align: center; }
.tray { display: flex; align-items: center; margin-left: auto; margin-right: 4px; padding-right: 12px; border-right: 1px solid #70757a; }
.tray > button { justify-content: center; width: 25px; }
.tray .weather { width: auto; gap: 8px; margin-right: 19px; font-size: 13px; }
.clock { display: flex; flex-direction: column; width: 71px; text-align: center; line-height: 18px; }
.tray .notif { position: relative; justify-content: flex-start; width: 26px; height: 34px; margin-left: 8px; padding-bottom: 4px; }
.cnt { position: absolute; right: 1px; bottom: 1px; box-sizing: border-box; width: 16px; height: 16px; border: 1px solid #777; border-radius: 50%; background: #333; text-align: center; line-height: 14px; }
</style>
